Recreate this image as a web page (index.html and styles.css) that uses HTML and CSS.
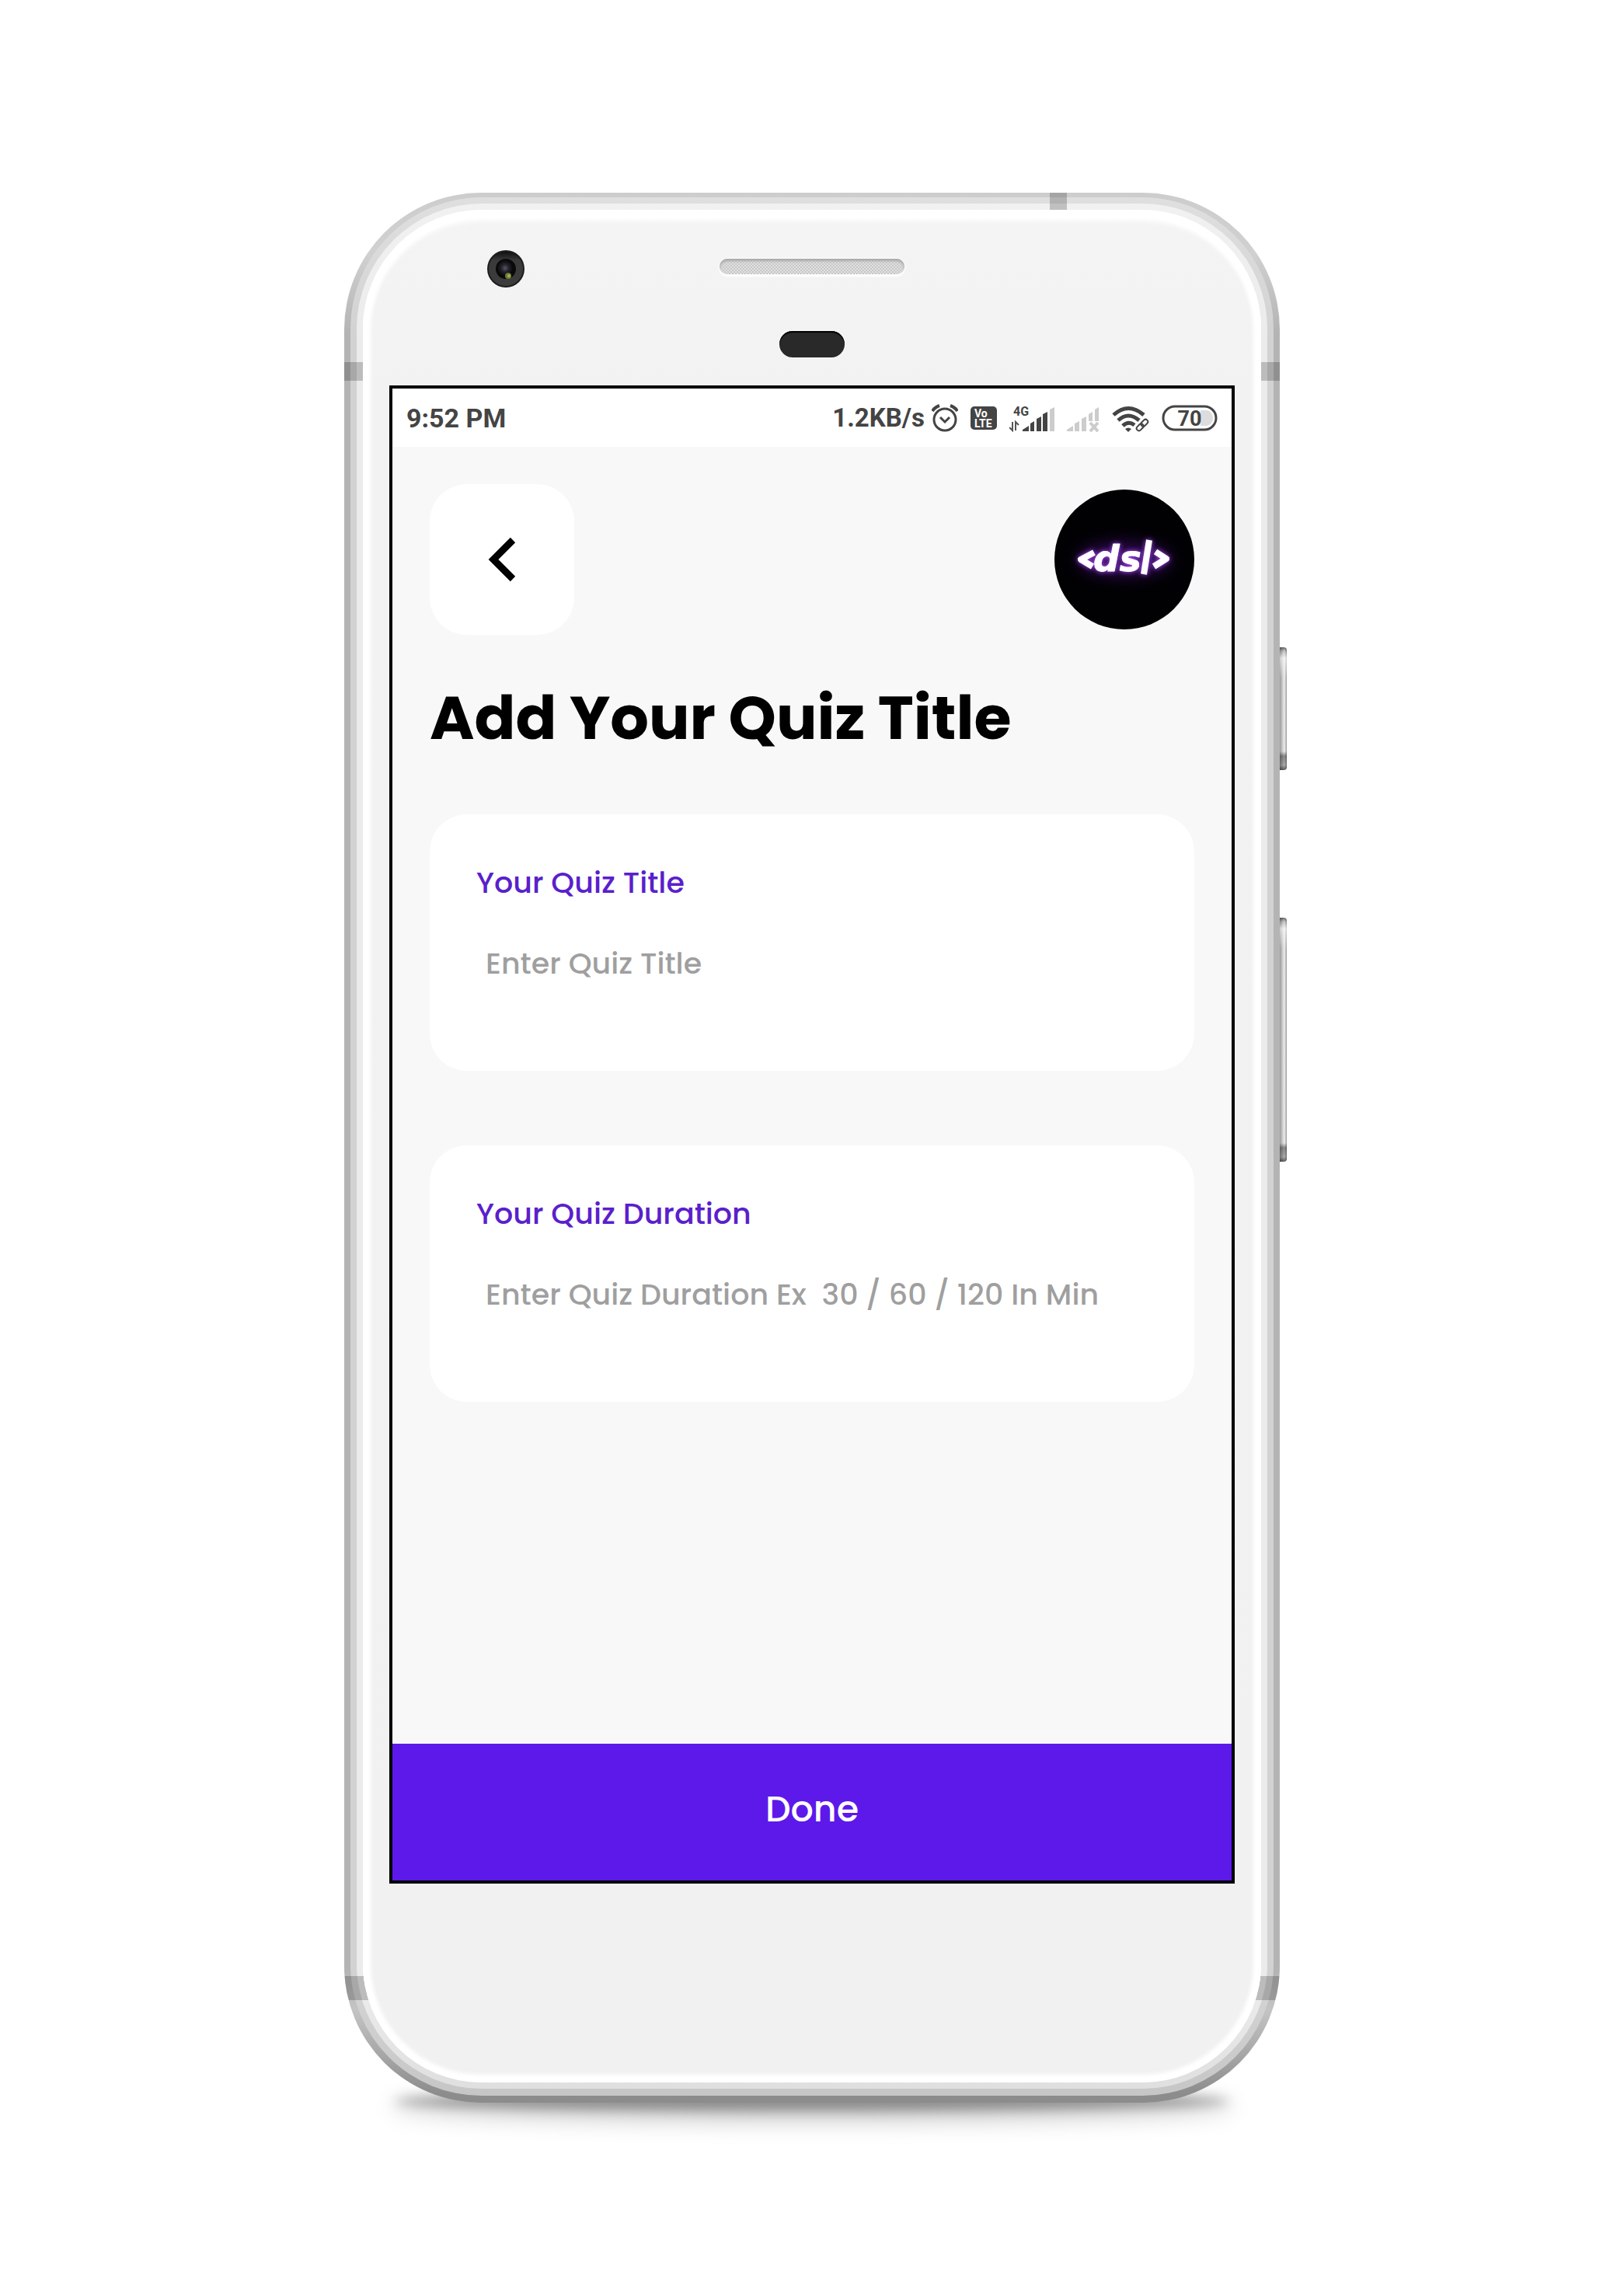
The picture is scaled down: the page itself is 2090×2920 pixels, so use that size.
FILE: index.html
```html
<!DOCTYPE html>
<html lang="en">
<head>
<meta charset="utf-8">
<meta name="viewport" content="width=device-width, initial-scale=1">
<title>Add Your Quiz Title</title>
<link rel="stylesheet" href="styles.css">
</head>
<body>
<div class="phone">
  <div class="ground-shadow"></div>
  <div class="side-key side-key-power"></div>
  <div class="side-key side-key-volume"></div>
  <div class="antennas">
    <span class="antenna antenna-top"></span>
    <span class="antenna antenna-upper"></span>
    <span class="antenna antenna-lower"></span>
  </div>
  <div class="rim rim-outer"><div class="rim rim-middle"><div class="rim rim-inner">
    <div class="face">
      <div class="sensors">
        <svg class="camera" viewBox="0 0 48 48" aria-hidden="true">
          <defs>
            <radialGradient id="lens"><stop offset="0" stop-color="#55556a"/><stop offset=".45" stop-color="#22232a"/><stop offset="1" stop-color="#050505"/></radialGradient>
            <linearGradient id="ring" x2="0" y2="1"><stop offset="0" stop-color="#101010"/><stop offset=".25" stop-color="#3a3a3a"/><stop offset="1" stop-color="#3c3c3c"/></linearGradient>
          </defs>
          <circle cx="24" cy="24" r="24" fill="#1c1c1c"/>
          <circle cx="24" cy="24" r="22" fill="url(#ring)"/>
          <circle cx="24" cy="24" r="13" fill="#0a0a0a"/>
          <circle cx="23" cy="23" r="11" fill="url(#lens)"/>
          <circle cx="27" cy="33" r="4" fill="#6f7a35"/>
          <circle cx="28" cy="33" r="2" fill="#a3ad5c"/>
        </svg>
        <div class="front">
          <div class="speaker"></div>
          <div class="proximity"></div>
        </div>
      </div>

      <div class="screen">
        <header class="status">
          <span class="clock">9:52 PM</span>
          <div class="status-icons">
            <span class="speed">1.2KB/s
              <svg width="34" height="36" viewBox="0 0 34 36" fill="none" stroke="#444" role="img" aria-label="Alarm">
                <circle cx="17" cy="20" r="14" stroke-width="3"/>
                <path d="M11 17l6 6 6-6" stroke-width="3"/>
                <path d="M1 9q3-5 9-7M33 9q-3-5-9-7" stroke-width="4"/>
              </svg>
            </span>
            <svg width="34" height="32" viewBox="0 0 34 32" role="img" aria-label="VoLTE">
              <rect y="1" width="34" height="30" rx="5" fill="#444"/>
              <text x="5" y="15" class="volte">Vo</text>
              <text x="5" y="28" class="volte">LTE</text>
            </svg>
            <svg width="58" height="36" viewBox="0 0 58 36" role="img" aria-label="4G signal">
              <text x="5" y="15" class="network">4G</text>
              <path d="M4 23v11l-4-4M8 34V23l4 4" fill="none" stroke="#555" stroke-width="2"/>
              <path d="M17 35v-2l8-5v7zM27 25l5-3v13h-5zM35 19l6-3v19h-6zM43 13l6-3v25h-6z" fill="#444"/>
              <path d="M52 7l6-3v31h-6z" fill="#ccc"/>
            </svg>
            <svg width="42" height="36" viewBox="0 0 42 36" role="img" aria-label="No signal on second line">
              <path d="M0 35v-2l8-5v7zM10 25l6-3v13h-6zM19 19l6-3v19h-6zM28 13l5-3v12h-5zM36 7l5-3v18h-5z" fill="#ccc"/>
              <path d="M30 24l10 11M40 24L30 35" stroke="#ccc" stroke-width="4"/>
            </svg>
            <svg width="48" height="36" viewBox="0 0 48 36" fill="none" stroke="#444" role="img" aria-label="Wi-Fi">
              <path d="M2 14q19-17 39 0M8 21q13-12 27 0M14 28q7-7 15-1" stroke-width="5"/>
              <path d="M17 32q4-3 8 0l-4 4z" fill="#444" stroke="none"/>
              <g stroke-width="2" transform="rotate(-45 39 27)"><rect x="30" y="24" width="10" height="6" rx="3"/><rect x="38" y="24" width="10" height="6" rx="3"/></g>
            </svg>
            <svg width="72" height="34" viewBox="0 0 72 34" role="img" aria-label="Battery 70">
              <path d="M50 7h8a8 10 0 0 1 0 20h-8z" fill="#ddd"/>
              <rect x="2" y="2" width="68" height="30" rx="15" fill="none" stroke="#444" stroke-width="3"/>
              <text x="36" y="27" class="battery">70</text>
            </svg>
          </div>
        </header>

        <main class="content">
          <div class="toolbar">
            <button class="back" type="button" aria-label="Back">
              <svg width="36" height="58" viewBox="0 0 36 58" aria-hidden="true"><path d="M32 4L7 29l25 25" fill="none" stroke="#000" stroke-width="9"/></svg>
            </button>
            <svg class="avatar" viewBox="0 0 180 180" role="img" aria-label="dsl">
              <circle cx="90" cy="90" r="90" fill="#010103"/>
              <ellipse class="halo" cx="90" cy="90" rx="60" ry="22" fill="#4a1080"/>
              <g class="glow" fill="none" stroke="#fff" stroke-linejoin="round">
                <path d="M51 81L34 90l15 9M130 80l14 9-16 10" stroke-width="8"/>
                <path d="M122 65l-7 44" stroke-width="8"/>
                <text x="50" y="105" class="logo">ds</text>
              </g>
            </svg>
          </div>
          <h1 class="title">Add Your Quiz Title</h1>
          <form class="fields" id="quiz">
            <div class="card">
              <label for="quiz-title">Your Quiz Title</label>
              <input id="quiz-title" type="text" placeholder="Enter Quiz Title">
            </div>
            <div class="card">
              <label for="quiz-duration">Your Quiz Duration</label>
              <input id="quiz-duration" type="text" placeholder="Enter Quiz Duration Ex  30 / 60 / 120 In Min">
            </div>
          </form>
        </main>
        <button class="done" type="submit" form="quiz">Done</button>
      </div>
    </div>
  </div></div></div>
</div>
</body>
</html>
```
FILE: styles.css
```css
* { box-sizing: border-box; }

body {
  margin: 0;
  padding: 248px 24px 214px;
  background: #fff;
  font-family: Poppins, Inter, sans-serif;
}

/* Handset */
.phone {
  position: relative;
  isolation: isolate;
  max-width: 1204px;
  margin: 0 auto;
}

.rim { border-radius: 176px; }

.rim-outer {
  padding: 6px 8px 9px;
  background: linear-gradient(#cdcdcd, #d0d0d0 80px, #b4b4b4 180px, #b4b4b4 calc(100% - 170px), #c4c4c4 calc(100% - 120px), #8c8c8c calc(100% - 10px));
}

.rim-middle {
  padding: 8px 8px 9px;
  border-radius: 169px;
  background: linear-gradient(#dfdfdf, #d2d2d2 180px, #d2d2d2 calc(100% - 120px), #c6c6c6);
}

.rim-inner {
  padding: 8px;
  border-radius: 161px;
  background: linear-gradient(#f1f1f1, #ebebeb 180px, #ebebeb calc(100% - 120px), #dfdfdf);
}

.face {
  position: relative;
  z-index: 1;
  padding: 0 34px 256px;
  border-radius: 153px;
  background: linear-gradient(#f4f4f4, #f2f2f2 240px, #f1f1f1);
  box-shadow: inset 0 0 5px 10px #fff, inset 0 8px 6px 6px #fff;
}

.ground-shadow {
  position: absolute;
  z-index: -1;
  right: 64px;
  bottom: -10px;
  left: 64px;
  height: 24px;
  border-radius: 50%;
  background: #888;
  box-shadow: 0 8px 24px 6px #0003;
  filter: blur(8px);
}

.side-key {
  position: absolute;
  left: 100%;
  width: 9px;
  border-radius: 0 4px 4px 0;
  background:
    linear-gradient(#0008, #0002 5px, #fff8 14px, transparent 40px, transparent calc(100% - 24px), #0006 calc(100% - 18px), #0004 calc(100% - 6px), #0009),
    linear-gradient(90deg, #999, #c4c4c4 3px, #eee 6px, #999);
}

.side-key-power { top: 585px; height: 158px; }
.side-key-volume { top: 933px; height: 314px; }

.antennas {
  position: absolute;
  z-index: 0;
  inset: 0;
  overflow: hidden;
  border-radius: 176px;
}

.antenna { position: absolute; background: #0003; }
.antenna-top { top: 0; right: 274px; width: 22px; height: 60px; }
.antenna-upper { top: 218px; right: 0; left: 0; height: 24px; }
.antenna-lower { right: 0; bottom: 132px; left: 0; height: 31px; }

.sensors {
  display: grid;
  grid-template-columns: 1fr auto 1fr;
  height: 226px;
  padding-top: 52px;
}

.camera { width: 48px; margin-left: 126px; }

.front {
  display: flex;
  flex-direction: column;
  align-items: center;
  gap: 73px;
  padding-top: 11px;
}

.speaker {
  width: 238px;
  height: 20px;
  border-radius: 10px;
  background: repeating-conic-gradient(#c6c6c6 0 25%, #e2e2e2 0 50%) 0 0 / 4px 4px;
  box-shadow: inset 0 3px 3px #aaa, 0 3px 3px #fff, 0 0 4px #fff;
}

.proximity {
  width: 84px;
  height: 34px;
  border-radius: 17px;
  background: #292929;
  box-shadow: inset 0 2px 1px #000, 0 0 3px #fff;
}

/* Screen */
.screen {
  display: flex;
  flex-direction: column;
  min-height: 1928px;
  border: 4px solid #000;
  background: #f8f8f8;
}

.status {
  display: flex;
  align-items: center;
  justify-content: space-between;
  height: 75px;
  padding: 0 18px;
  background: #fff;
  color: #444;
  font: 700 34px/40px Roboto, sans-serif;
}

.status-icons, .speed { display: flex; align-items: center; gap: 16px; }
.speed { gap: 9px; font-size: 33px; }

.volte { fill: #fff; font: 700 14px Roboto, sans-serif; }
.network { fill: #444; font: 700 16px Roboto, sans-serif; }
.battery { fill: #444; font: 700 27px Roboto, sans-serif; text-anchor: middle; }

.content { padding: 48px 48px 96px; }

.toolbar {
  display: flex;
  align-items: center;
  justify-content: space-between;
}

.back {
  display: grid;
  place-items: center;
  width: 186px;
  height: 194px;
  padding: 0;
  border: 0;
  border-radius: 48px;
  background: #fff;
}

.avatar { width: 180px; height: 180px; }
.halo { filter: blur(10px); opacity: .6; }
.glow { filter: drop-shadow(0 0 3px #b04dff); }
.logo { fill: #fff; stroke-width: 1px; font: italic 700 47px "DejaVu Sans", sans-serif; }

.title {
  margin: 59px 0 76px;
  color: #000;
  font-size: 78px;
  font-weight: 700;
  line-height: 96px;
}

.fields { display: grid; gap: 96px; }

.card {
  display: flex;
  flex-direction: column;
  gap: 47px;
  min-height: 330px;
  padding: 60px 48px 60px 60px;
  border-radius: 48px;
  background: #fff;
}

.card label {
  color: #5a20cb;
  font-size: 38px;
  font-weight: 500;
  line-height: 56px;
}

.card input {
  width: 100%;
  height: 56px;
  padding: 0 0 0 12px;
  border: 0;
  outline: 0;
  background: none;
  color: #222;
  font: inherit;
  font-size: 38px;
  font-weight: 500;
}

.card input::placeholder { color: #9f9f9f; opacity: 1; }

.done {
  height: 176px;
  margin-top: auto;
  padding: 0 0 8px;
  border: 0;
  background: #5d19ea;
  color: #fff;
  font: inherit;
  font-size: 46px;
  font-weight: 500;
}
```
